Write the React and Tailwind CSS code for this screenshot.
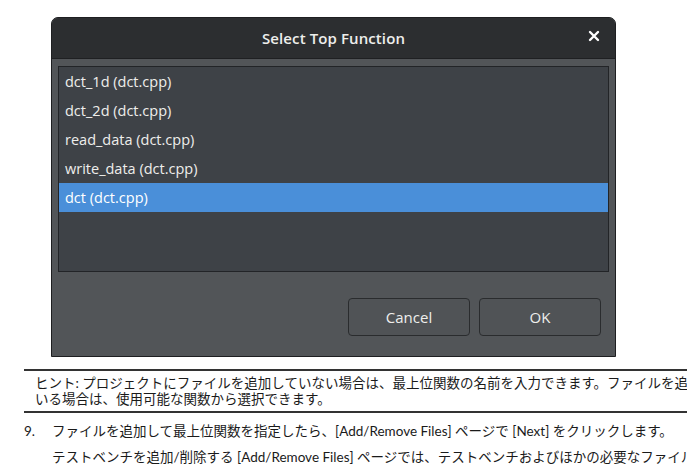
import React from "react";

const functions = [
  "dct_1d (dct.cpp)",
  "dct_2d (dct.cpp)",
  "read_data (dct.cpp)",
  "write_data (dct.cpp)",
  "dct (dct.cpp)",
];

const SelectTopFunction = () => {
  const selected = 4;

  return (
    <div className="ml-[51px] mt-[17px] w-[565px] h-[340px] flex flex-col rounded-t-[7px] border border-[#1e1f21] bg-[#525558] font-['Open_Sans',sans-serif] text-[#eeeeec]">
      {/* Header */}
      <div className="h-[41px] flex items-center justify-center relative bg-[#2c2e30] rounded-t-[6px] border-b border-[#1f2022]">
        <span className="text-[15px] font-semibold tracking-[0.1px]">Select Top Function</span>
        <button className="absolute right-[15px] top-[12px] text-white">
          <svg width="12" height="12" viewBox="0 0 12 12">
            <path d="M2 2 L10 10 M10 2 L2 10" stroke="#ffffff" strokeWidth="2.4" strokeLinecap="round" />
          </svg>
        </button>
      </div>

      {/* List */}
      <div className="mx-[6px] mt-[7px] h-[206px] border border-[#222427] bg-[#3e4247]">
        {functions.map((name, i) => (
          <div
            key={name}
            className={`h-[29px] flex items-center pl-[6px] text-[14.5px] ${
              i === selected ? "bg-[#4a8fd9] text-white" : ""
            }`}
          >
            {name}
          </div>
        ))}
      </div>

      {/* Buttons */}
      <div className="flex justify-end gap-[9px] mt-[26px] mr-[14px]">
        <button className="w-[122px] h-[38px] rounded-[4px] border border-[#2a2c2e] bg-[#505356] text-[15px] text-[#eeeeec]">
          Cancel
        </button>
        <button className="w-[122px] h-[38px] rounded-[4px] border border-[#2a2c2e] bg-[#505356] text-[15px] text-[#eeeeec]">
          OK
        </button>
      </div>
    </div>
  );
};

const App = () => {
  return (
    <div className="w-[687px] h-[465px] overflow-hidden bg-white font-['Lato','Noto_Sans_CJK_JP',sans-serif] text-[#1a1a1a]">
      <SelectTopFunction />

      {/* Hint */}
      <div className="ml-[24px] mt-[12px] w-[700px] border-t-2 border-b-2 border-[#333333] pt-[4px] pb-[4px] pl-[11px] text-[13.5px] leading-[16px] whitespace-nowrap">
        <div>ヒント: プロジェクトにファイルを追加していない場合は、最上位関数の名前を入力できます。ファイルを追加して</div>
        <div>いる場合は、使用可能な関数から選択できます。</div>
      </div>

      {/* Step 9 */}
      <div className="flex ml-[24px] mt-[10px] text-[13.5px] leading-[16px] whitespace-nowrap">
        <span className="w-[28px] shrink-0">9.</span>
        <div>
          <div>ファイルを追加して最上位関数を指定したら、[Add/Remove Files] ページで [Next] をクリックします。</div>
          <div className="mt-[10px]">テストベンチを追加/削除する [Add/Remove Files] ページでは、テストベンチおよびほかの必要なファイルを追加します。</div>
        </div>
      </div>
    </div>
  );
};

export default App;
